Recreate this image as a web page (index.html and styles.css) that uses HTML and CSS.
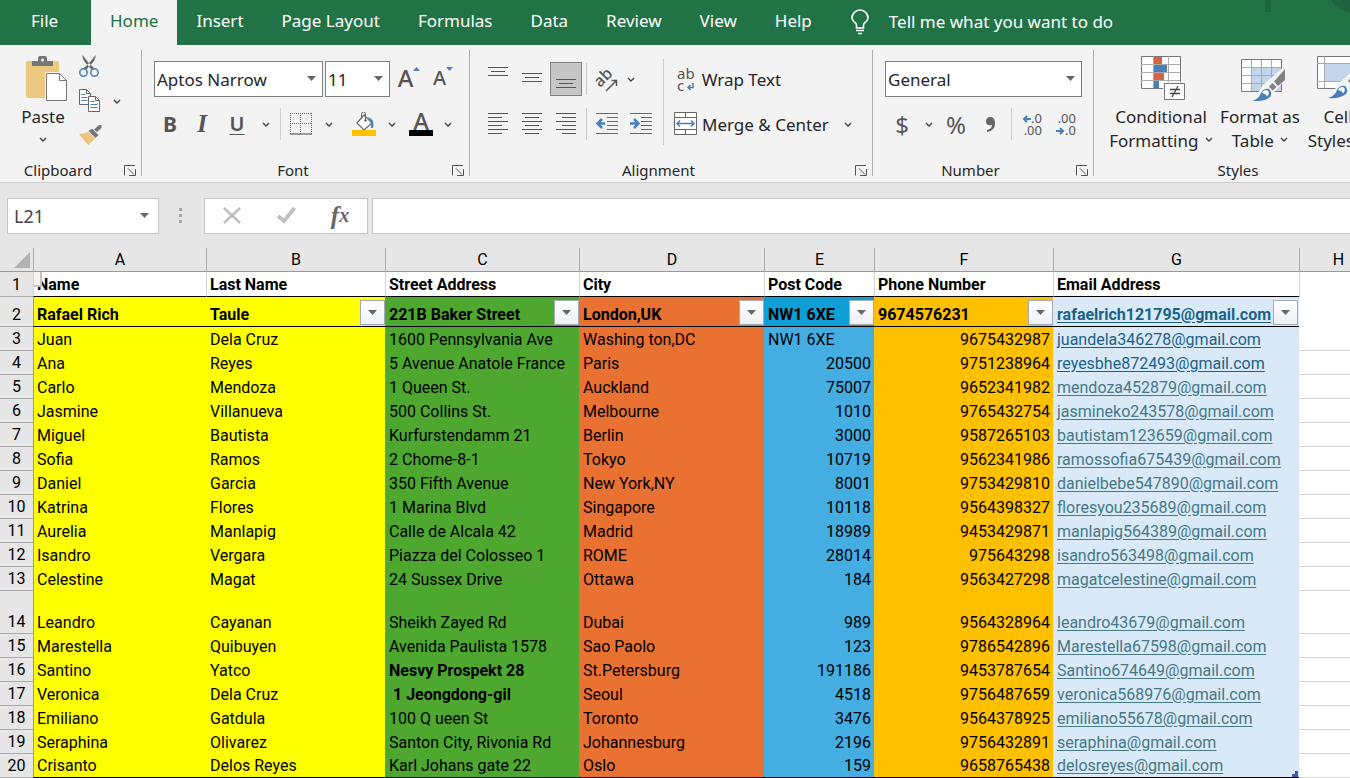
FILE: index.html
```
<!DOCTYPE html>
<html lang="en">
<head>
    <meta charset="UTF-8">
    <meta name="viewport" content="width=device-width, initial-scale=1.0">
    <title>Address List</title>
    <link rel="stylesheet" href="styles.css">
</head>
<body>
    <!-- shared icon shapes -->
    <svg class="defs" aria-hidden="true">
        <symbol id="chev" viewBox="0 0 8 6"><path d="M1 1l3 3 3-3" fill="none" stroke="#444" stroke-width="1.4"/></symbol>
        <symbol id="arrow" viewBox="0 0 9 5"><path d="M0 0h9L4.500 5z" fill="#666"/></symbol>
        <symbol id="launch" viewBox="0 0 12 11"><path d="M.5 10.500V.5H11M4 3.500l6 6M11.500 4v6.500H5" fill="none" stroke="#555"/></symbol>
    </svg>

    <nav class="tabs">
        <a href="#" class="file">File</a>
        <a href="#" class="active">Home</a>
        <a href="#">Insert</a>
        <a href="#">Page Layout</a>
        <a href="#">Formulas</a>
        <a href="#">Data</a>
        <a href="#">Review</a>
        <a href="#">View</a>
        <a href="#">Help</a>
        <button class="tell">
            <svg width="18" height="26" viewBox="0 0 18 26" fill="none" stroke="#fff" stroke-width="1.600"><path d="M5.500 19v-3C5.500 13 1 13 1 9a8 8 0 0 1 16 0c0 4-4.500 4-4.500 7v3zM5 21.500h8M7 24.500h4"/></svg>
            Tell me what you want to do
        </button>
        <svg class="deco" width="90" height="45" viewBox="0 0 90 45" fill="#1e6340"><path d="M5 0h6v12H5zM72 0h18v13C82 10 75 6 72 2z"/></svg>
    </nav>

    <div class="ribbon">
        <section class="group clipboard">
            <div class="body">
                <button class="paste">
                    <svg width="42" height="46" viewBox="0 0 42 46"><rect y="5" width="33" height="37" rx="2" fill="#edc87e"/><path d="M6 10V5h6V2q0-2 2-2h5q2 0 2 2v3h6v5z" fill="#777"/><circle cx="16.500" cy="4" r="1.500" fill="#f3f3f3"/><path d="M19 16h16l7 7v23H19z" fill="#f3f3f3"/><path d="M20.500 17.500h13l7 7v20h-20z" fill="#fff" stroke="#777"/><path d="M33.500 17.500v7h7" fill="none" stroke="#777"/></svg>
                    <span>Paste</span>
                    <svg class="chev"><use href="#chev"/></svg>
                </button>
                <div class="stack">
                    <button aria-label="Cut"><svg width="20" height="22" viewBox="0 0 20 22"><path d="M3.500 0l5 6.500L16 14l-3 1-6-6.500Q3 4 3.500 0zM16.500 0l-5 6.500L4 14l3 1 6-6.500Q17 4 16.500 0z" fill="#666"/><g fill="none" stroke="#4a7fb8" stroke-width="1.500"><circle cx="4.500" cy="17.500" r="3.700"/><circle cx="15.500" cy="17.500" r="3.700"/></g></svg></button>
                    <span class="copy">
                        <button aria-label="Copy"><svg width="21" height="23" viewBox="0 0 21 23" fill="#fff" stroke="#666"><path d="M.5.5h7l4 4v11H.5zM7.500.5v4h4"/><path d="M2.500 5.500h4M2.500 8.500h6M2.500 11.500h6" stroke="#4a7fb8"/><path d="M9.500 7.500h7l4 4v11h-11zM16.500 7.500v4h4"/><path d="M11.500 12.500h4M11.500 15.500h7M11.500 18.500h7" stroke="#4a7fb8"/></svg></button>
                        <button class="drop" aria-label="Copy options"><svg class="chev"><use href="#chev"/></svg></button>
                    </span>
                    <button aria-label="Format Painter"><svg width="23" height="21" viewBox="0 0 23 21"><path d="M0 9q5 0 9-2l7 6.500L9.500 20Q4 15 0 9z" fill="#edc480"/><path d="M9.500 6L13 3.500l6.500 6.500-3 3zM15 4.500L20 0h2.500v3L18 7z" fill="#777"/></svg></button>
                </div>
            </div>
            <footer><span>Clipboard</span><button aria-label="Clipboard settings"><svg class="launch"><use href="#launch"/></svg></button></footer>
        </section>

        <section class="group font">
            <div class="body rows">
                <div class="row">
                    <span class="combo name"><select aria-label="Font name"><option>Aptos Narrow</option></select><svg class="arrow"><use href="#arrow"/></svg></span>
                    <span class="combo size"><select aria-label="Font size"><option>11</option></select><svg class="arrow"><use href="#arrow"/></svg></span>
                    <button class="tool grow" aria-label="Increase font size"><span>A</span><svg width="7" height="4" viewBox="0 0 7 4"><path d="M0 4l3.500-4L7 4z" fill="#4a7fb8"/></svg></button>
                    <button class="tool grow small" aria-label="Decrease font size"><span>A</span><svg width="7" height="4" viewBox="0 0 7 4"><path d="M0 0h7L3.500 4z" fill="#4a7fb8"/></svg></button>
                </div>
                <div class="row">
                    <button class="tool bold">B</button>
                    <button class="tool italic">I</button>
                    <button class="tool under">U</button>
                    <button class="drop" aria-label="Underline options"><svg class="chev"><use href="#chev"/></svg></button>
                    <i class="line"></i>
                    <button class="tool" aria-label="Borders"><svg width="22" height="22" viewBox="0 0 22 22" fill="none" stroke="#666"><path d="M0 .5h22M.5 0v21M10.500 0v21M21.500 0v21M0 10.500h22" stroke-dasharray="1 1"/><path d="M0 21h22" stroke="#444"/></svg></button>
                    <button class="drop" aria-label="Border options"><svg class="chev"><use href="#chev"/></svg></button>
                    <button class="tool" aria-label="Fill color"><svg width="24" height="25" viewBox="0 0 24 25"><path d="M0 18h24v6H0z" fill="#ffc000"/><path d="M12 3l8 8-8 7-7-7z" fill="#fff" stroke="#666" stroke-width="1.200"/><path d="M9.500 7V2q0-2 2-2t2 2v7" fill="none" stroke="#666"/><circle cx="13.500" cy="8.500" r="1.200" fill="#666"/><path d="M16 5q7 2 5 11h-2q1-4-1-7z" fill="#4a7fb8"/></svg></button>
                    <button class="drop" aria-label="Fill color options"><svg class="chev"><use href="#chev"/></svg></button>
                    <button class="tool color" aria-label="Font color">A</button>
                    <button class="drop" aria-label="Font color options"><svg class="chev"><use href="#chev"/></svg></button>
                </div>
            </div>
            <footer><span>Font</span><button aria-label="Font settings"><svg class="launch"><use href="#launch"/></svg></button></footer>
        </section>

        <section class="group alignment">
            <div class="body">
                <div class="rows">
                    <div class="row">
                        <button class="tool" aria-label="Top Align"><svg width="20" height="34" viewBox="0 0 20 34" stroke="#555"><path d="M0 5.500h20M3 9.500h14M0 13.500h20"/></svg></button>
                        <button class="tool" aria-label="Middle Align"><svg width="20" height="34" viewBox="0 0 20 34" stroke="#555"><path d="M0 11.500h20M3 15.500h14M0 19.500h20"/></svg></button>
                        <button class="tool on" aria-label="Bottom Align"><svg width="20" height="34" viewBox="0 0 20 34" stroke="#555"><path d="M0 17.500h20M3 21.500h14M0 25.500h20"/></svg></button>
                        <i class="line"></i>
                        <button class="tool orient" aria-label="Orientation"><span>ab</span><svg width="14" height="14" viewBox="0 0 14 14" fill="none" stroke="#555" stroke-width="1.500"><path d="M2 13L12 3M7.500 2.500h5V8"/></svg></button>
                        <button class="drop turn" aria-label="Orientation options"><svg class="chev"><use href="#chev"/></svg></button>
                    </div>
                    <div class="row">
                        <button class="tool" aria-label="Align Left"><svg width="20" height="22" viewBox="0 0 20 22" stroke="#555"><path d="M0 .5h20M0 4.500h14M0 8.500h20M0 12.500h14M0 16.500h20M0 20.500h14"/></svg></button>
                        <button class="tool" aria-label="Center"><svg width="20" height="22" viewBox="0 0 20 22" stroke="#555"><path d="M0 .5h20M3 4.500h14M0 8.500h20M3 12.500h14M0 16.500h20M3 20.500h14"/></svg></button>
                        <button class="tool" aria-label="Align Right"><svg width="20" height="22" viewBox="0 0 20 22" stroke="#555"><path d="M0 .5h20M6 4.500h14M0 8.500h20M6 12.500h14M0 16.500h20M6 20.500h14"/></svg></button>
                        <i class="line"></i>
                        <button class="tool" aria-label="Decrease Indent"><svg width="22" height="22" viewBox="0 0 22 22" stroke="#666"><path d="M0 .5h22M11 4.500h11M11 8.500h11M11 12.500h11M11 16.500h11M0 20.500h22"/><path d="M9 10.500H2M6 6l-4.500 4.500L6 15" fill="none" stroke="#4a7fb8" stroke-width="2.500"/></svg></button>
                        <button class="tool" aria-label="Increase Indent"><svg width="22" height="22" viewBox="0 0 22 22" stroke="#666"><path d="M0 .5h22M11 4.500h11M11 8.500h11M11 12.500h11M11 16.500h11M0 20.500h22"/><path d="M0 10.500h7M4 6l4.500 4.500L4 15" fill="none" stroke="#4a7fb8" stroke-width="2.500"/></svg></button>
                    </div>
                </div>
                <i class="line tall"></i>
                <div class="rows wide">
                    <button class="row text"><span class="wrapicon"><span>ab</span><span>c<svg width="8" height="8" viewBox="0 0 8 8" fill="none" stroke="#4a7fb8" stroke-width="1.500"><path d="M7 0v4.500H2M4.500 2L2 4.500 4.500 7"/></svg></span></span>Wrap Text</button>
                    <div class="row">
                        <button class="text"><svg width="24" height="24" viewBox="0 0 24 24" fill="#fff" stroke="#666"><path d="M.5.5h22v22H.5zM11.500 0v5M11.500 18v5M0 5.500h23M0 17.500h23"/><path d="M3 11.500h17M6 8.500l-3 3 3 3M17 8.500l3 3-3 3" fill="none" stroke="#4a7fb8" stroke-width="1.500"/></svg>Merge &amp; Center</button>
                        <button class="drop" aria-label="Merge options"><svg class="chev"><use href="#chev"/></svg></button>
                    </div>
                </div>
            </div>
            <footer><span>Alignment</span><button aria-label="Alignment settings"><svg class="launch"><use href="#launch"/></svg></button></footer>
        </section>

        <section class="group number">
            <div class="body rows">
                <div class="row">
                    <span class="combo format"><select aria-label="Number format"><option>General</option></select><svg class="arrow"><use href="#arrow"/></svg></span>
                </div>
                <div class="row">
                    <button class="tool sign">$</button>
                    <button class="drop" aria-label="Currency options"><svg class="chev"><use href="#chev"/></svg></button>
                    <button class="tool sign">%</button>
                    <button class="tool" aria-label="Comma Style"><svg width="10" height="15" viewBox="0 0 10 15"><path d="M1 13q5-1 5-5Q0 9 0 4.500 0 0 4.500 0 9 0 9 6q0 8-8 9z" fill="#666"/></svg></button>
                    <i class="line"></i>
                    <button class="tool dec" aria-label="Increase Decimal"><span><svg width="9" height="8" viewBox="0 0 9 8" fill="none" stroke="#4a7fb8" stroke-width="2"><path d="M9 4H2M5 1L2 4l3 3"/></svg>.0</span><span>.00</span></button>
                    <button class="tool dec" aria-label="Decrease Decimal"><span>.00</span><span><svg width="9" height="8" viewBox="0 0 9 8" fill="none" stroke="#4a7fb8" stroke-width="2"><path d="M0 4h7M4 1l3 3-3 3"/></svg>.0</span></button>
                </div>
            </div>
            <footer><span>Number</span><button aria-label="Number settings"><svg class="launch"><use href="#launch"/></svg></button></footer>
        </section>

        <section class="group styles">
            <div class="body">
                <button class="big cond">
                    <svg width="46" height="46" viewBox="0 0 46 46"><path d="M1.500 1.500h39v32h-39z" fill="#fff" stroke="#777"/><path d="M1 9.500h39M1 17.500h39M1 25.500h39M13.500 1v32M28.500 1v32" stroke="#aaa"/><path d="M14 2h8v7h-8zM14 18h10v7H14z" fill="#d86344"/><path d="M14 10h13v7H14zM14 26h5v7h-5z" fill="#4a7fb8"/><path d="M23 27h23v19H23z" fill="#f3f3f3"/><path d="M24.500 28.500h20v16h-20z" fill="#fff" stroke="#777"/><path d="M30 34.500h10M30 38.500h10M38 31l-6 11" stroke="#444" stroke-width="1.300"/></svg>
                    <span>Conditional</span>
                    <span>Formatting <svg class="chev"><use href="#chev"/></svg></span>
                </button>
                <button class="big table">
                    <svg width="46" height="46" viewBox="0 0 46 46"><path d="M2.500 4.500h40v32h-40z" fill="#fff" stroke="#777"/><path d="M13 13h29v23H13z" fill="#c3d5ea"/><path d="M3 12.500h39M3 20.500h39M3 28.500h39M12.500 5v31M22.500 5v31M32.500 5v31" stroke="#aaa"/><path d="M46 11v14L32 41 14 45l10-15z" fill="#f3f3f3"/><path d="M46 14v11l-7 6-4-4.500zM33.500 28l4 4-4 3.500-3.500-4z" fill="#808080"/><path d="M13 46q7-2 9-8 3-5 8-4 4 4 1 8-6 5-18 4z" fill="#4a7fb8"/><path d="M23 38q2-4 6-2.500 2 3-1 6-1-3-5-3.500z" fill="#fff"/></svg>
                    <span>Format as</span>
                    <span>Table <svg class="chev"><use href="#chev"/></svg></span>
                </button>
                <button class="big cell">
                    <svg width="46" height="46" viewBox="0 0 46 46"><path d="M.5 1.500h45v32H.5z" fill="#fff" stroke="#777"/><path d="M8 9h32v18H8z" fill="#c3d5ea"/><path d="M0 8.500h45M0 26.500h45M7.500 1v32" stroke="#aaa"/><path d="M46 6v16L30 40 12 43l10-15z" fill="#f3f3f3"/><path d="M46 10v11l-11 9-4-4z" fill="#808080"/><path d="M11 43q7-2 9-8 3-5 8-4 4 4 1 8-6 5-18 4z" fill="#4a7fb8"/><path d="M21 35q2-4 6-2.500 2 3-1 6-1-3-5-3.500z" fill="#fff"/></svg>
                    <span>Cell</span>
                    <span>Styles <svg class="chev"><use href="#chev"/></svg></span>
                </button>
            </div>
            <footer><span>Styles</span></footer>
        </section>
    </div>

    <div class="formula">
        <span class="combo cellname"><input type="text" value="L21" aria-label="Name Box"><svg class="arrow"><use href="#arrow"/></svg></span>
        <svg class="dots" width="3" height="16" viewBox="0 0 3 16" fill="#a6a6a6"><path d="M0 0h3v3H0zM0 6h3v3H0zM0 12h3v3H0z"/></svg>
        <div class="entry">
            <button aria-label="Cancel"><svg width="18" height="17" viewBox="0 0 18 17" stroke="#c0c0c0" stroke-width="2.500"><path d="M1 1l16 15M17 1L1 16"/></svg></button>
            <button aria-label="Enter"><svg width="19" height="17" viewBox="0 0 19 17" fill="none" stroke="#c0c0c0" stroke-width="4"><path d="M1 9l6 5L17.500 1"/></svg></button>
            <button class="fx" aria-label="Insert Function">f<small>x</small></button>
        </div>
        <input class="value" type="text" aria-label="Formula Bar">
    </div>

    <div class="sheet">
        <table>
            <colgroup>
                <col class="n"><col class="a"><col class="b"><col class="c"><col class="d"><col class="e"><col class="f"><col class="g"><col class="h">
            </colgroup>
            <thead>
                <tr><th><svg class="corner" width="16" height="16" viewBox="0 0 16 16"><path d="M16 0v16H0z" fill="#b2b2b2"/></svg></th><th>A</th><th>B</th><th>C</th><th>D</th><th>E</th><th>F</th><th>G</th><th>H</th></tr>
            </thead>
            <tbody>
                <tr class="titles"><th>1</th><td><i class="tip"></i>Name</td><td>Last Name</td><td>Street Address</td><td>City</td><td>Post Code</td><td>Phone Number</td><td>Email Address</td><td></td></tr>
                <tr class="filters"><th>2</th>
                    <td>Rafael Rich</td>
                    <td>Taule<button aria-label="Filter B"><svg class="arrow"><use href="#arrow"/></svg></button></td>
                    <td>221B Baker Street<button aria-label="Filter C"><svg class="arrow"><use href="#arrow"/></svg></button></td>
                    <td>London,UK<button aria-label="Filter D"><svg class="arrow"><use href="#arrow"/></svg></button></td>
                    <td>NW1 6XE<button aria-label="Filter E"><svg class="arrow"><use href="#arrow"/></svg></button></td>
                    <td>9674576231<button aria-label="Filter F"><svg class="arrow"><use href="#arrow"/></svg></button></td>
                    <td><a class="new" href="mailto:rafaelrich121795@gmail.com">rafaelrich121795@gmail.com</a><button aria-label="Filter G"><svg class="arrow"><use href="#arrow"/></svg></button></td>
                    <td></td>
                </tr>
                <tr><th>3</th><td>Juan</td><td>Dela Cruz</td><td>1600 Pennsylvania Ave</td><td>Washing ton,DC</td><td class="left">NW1 6XE</td><td>9675432987</td><td><a class="new" href="mailto:juandela346278@gmail.com">juandela346278@gmail.com</a></td><td></td></tr>
                <tr><th>4</th><td>Ana</td><td>Reyes</td><td>5 Avenue Anatole France</td><td>Paris</td><td>20500</td><td>9751238964</td><td><a class="new" href="mailto:reyesbhe872493@gmail.com">reyesbhe872493@gmail.com</a></td><td></td></tr>
                <tr><th>5</th><td>Carlo</td><td>Mendoza</td><td>1 Queen St.</td><td>Auckland</td><td>75007</td><td>9652341982</td><td><a href="mailto:mendoza452879@gmail.com">mendoza452879@gmail.com</a></td><td></td></tr>
                <tr><th>6</th><td>Jasmine</td><td>Villanueva</td><td>500 Collins St.</td><td>Melbourne</td><td>1010</td><td>9765432754</td><td><a href="mailto:jasmineko243578@gmail.com">jasmineko243578@gmail.com</a></td><td></td></tr>
                <tr><th>7</th><td>Miguel</td><td>Bautista</td><td>Kurfurstendamm 21</td><td>Berlin</td><td>3000</td><td>9587265103</td><td><a href="mailto:bautistam123659@gmail.com">bautistam123659@gmail.com</a></td><td></td></tr>
                <tr><th>8</th><td>Sofia</td><td>Ramos</td><td>2 Chome-8-1</td><td>Tokyo</td><td>10719</td><td>9562341986</td><td><a href="mailto:ramossofia675439@gmail.com">ramossofia675439@gmail.com</a></td><td></td></tr>
                <tr><th>9</th><td>Daniel</td><td>Garcia</td><td>350 Fifth Avenue</td><td>New York,NY</td><td>8001</td><td>9753429810</td><td><a href="mailto:danielbebe547890@gmail.com">danielbebe547890@gmail.com</a></td><td></td></tr>
                <tr><th>10</th><td>Katrina</td><td>Flores</td><td>1 Marina Blvd</td><td>Singapore</td><td>10118</td><td>9564398327</td><td><a href="mailto:floresyou235689@gmail.com">floresyou235689@gmail.com</a></td><td></td></tr>
                <tr><th>11</th><td>Aurelia</td><td>Manlapig</td><td>Calle de Alcala 42</td><td>Madrid</td><td>18989</td><td>9453429871</td><td><a href="mailto:manlapig564389@gmail.com">manlapig564389@gmail.com</a></td><td></td></tr>
                <tr><th>12</th><td>Isandro</td><td>Vergara</td><td>Piazza del Colosseo 1</td><td>ROME</td><td>28014</td><td>975643298</td><td><a href="mailto:isandro563498@gmail.com">isandro563498@gmail.com</a></td><td></td></tr>
                <tr><th>13</th><td>Celestine</td><td>Magat</td><td>24 Sussex Drive</td><td>Ottawa</td><td>184</td><td>9563427298</td><td><a href="mailto:magatcelestine@gmail.com">magatcelestine@gmail.com</a></td><td></td></tr>
                <tr class="high"><th>14</th><td>Leandro</td><td>Cayanan</td><td>Sheikh Zayed Rd</td><td>Dubai</td><td>989</td><td>9564328964</td><td><a href="mailto:leandro43679@gmail.com">leandro43679@gmail.com</a></td><td></td></tr>
                <tr><th>15</th><td>Marestella</td><td>Quibuyen</td><td>Avenida Paulista 1578</td><td>Sao Paolo</td><td>123</td><td>9786542896</td><td><a href="mailto:Marestella67598@gmail.com">Marestella67598@gmail.com</a></td><td></td></tr>
                <tr><th>16</th><td>Santino</td><td>Yatco</td><td><b>Nesvy Prospekt 28</b></td><td>St.Petersburg</td><td>191186</td><td>9453787654</td><td><a href="mailto:Santino674649@gmail.com">Santino674649@gmail.com</a></td><td></td></tr>
                <tr><th>17</th><td>Veronica</td><td>Dela Cruz</td><td><b>&nbsp;1 Jeongdong-gil</b></td><td>Seoul</td><td>4518</td><td>9756487659</td><td><a href="mailto:veronica568976@gmail.com">veronica568976@gmail.com</a></td><td></td></tr>
                <tr><th>18</th><td>Emiliano</td><td>Gatdula</td><td>100 Q ueen St</td><td>Toronto</td><td>3476</td><td>9564378925</td><td><a href="mailto:emiliano55678@gmail.com">emiliano55678@gmail.com</a></td><td></td></tr>
                <tr><th>19</th><td>Seraphina</td><td>Olivarez</td><td>Santon City, Rivonia Rd</td><td>Johannesburg</td><td>2196</td><td>9756432891</td><td><a href="mailto:seraphina@gmail.com">seraphina@gmail.com</a></td><td></td></tr>
                <tr class="last"><th>20</th><td>Crisanto</td><td>Delos Reyes</td><td>Karl Johans gate 22</td><td>Oslo</td><td>159</td><td>9658765438</td><td><a href="mailto:delosreyes@gmail.com">delosreyes@gmail.com</a><svg class="handle" width="6" height="6" viewBox="0 0 6 6"><path d="M3 0h3v6H0V3h3z" fill="#4458b0"/></svg></td><td></td></tr>
            </tbody>
        </table>
    </div>
</body>
</html>
```
FILE: styles.css
```
*{
    box-sizing: border-box;
}
body{
    margin: 0;
    background: #e6e6e6;
    color: #262626;
    font-family: "Noto Sans", "Open Sans", sans-serif;
    font-size: 17px;
    overflow: hidden;
}
button{
    display: flex;
    align-items: center;
    justify-content: center;
    margin: 0;
    padding: 0;
    border: 0;
    background: none;
    color: inherit;
    font: inherit;
    white-space: nowrap;
}
svg{
    flex: none;
}
.defs{
    position: absolute;
    width: 0;
    height: 0;
}
.chev{
    width: 8px;
    height: 6px;
}
.arrow{
    width: 9px;
    height: 5px;
}
.launch{
    width: 12px;
    height: 11px;
}

/* tabs */
.tabs{
    position: relative;
    display: flex;
    height: 45px;
    background: #217346;
    color: #fff;
    line-height: 42px;
    overflow: hidden;
}
.tabs a{
    padding: 0 19px;
    color: #fff;
    text-decoration: none;
    white-space: nowrap;
}
.tabs .file{
    width: 91px;
    padding: 0 31px;
}
.tabs .active{
    background: #f3f3f3;
    color: #217346;
}
.tell{
    height: 43px;
    gap: 20px;
    margin-left: 20px;
}
.deco{
    position: absolute;
    top: 0;
    right: 0;
}

/* ribbon */
.ribbon{
    display: flex;
    height: 138px;
    background: #f3f3f3;
    border-bottom: 1px solid #cfcfcf;
    overflow: hidden;
}
.group{
    position: relative;
    display: flex;
    flex: none;
    flex-direction: column;
    padding-top: 3px;
}
.group::after{
    content: "";
    position: absolute;
    top: 5px;
    right: 0;
    bottom: 6px;
    width: 1px;
    background: #b0b0b0;
}
.styles::after{
    display: none;
}
.body{
    display: flex;
    flex: 1;
}
.group footer{
    display: flex;
    align-items: center;
    height: 24px;
    font-size: 15px;
    line-height: 24px;
}
.group footer span{
    flex: 1;
    text-align: center;
}
.group footer button{
    width: 26px;
    padding-left: 8px;
    justify-content: flex-start;
}
.clipboard{
    width: 142px;
}
.font{
    width: 328px;
}
.alignment{
    width: 403px;
}
.number{
    width: 221px;
}
.styles{
    width: 288px;
}
.paste{
    flex-direction: column;
    justify-content: flex-start;
    width: 60px;
    margin-left: 13px;
    padding: 8px 0 0 8px;
}
.paste span{
    margin-left: -8px;
    line-height: 30px;
}
.paste .chev{
    margin: 5px 8px 0 0;
}
.stack{
    display: grid;
    grid-template-rows: 35px 35px 35px;
    align-items: center;
    justify-items: start;
    margin-left: 6px;
}
.copy{
    display: flex;
}
.drop{
    width: 20px;
    height: 34px;
    padding-top: 2px;
}
.copy .drop{
    width: 34px;
    height: 23px;
    padding-top: 3px;
}
.rows{
    display: flex;
    flex-direction: column;
    gap: 9px;
    padding-top: 13px;
}
.font .rows,
.number .rows{
    padding-left: 12px;
}
.row{
    display: flex;
    align-items: center;
    height: 36px;
}
.combo{
    position: relative;
    display: flex;
    height: 36px;
    border: 1px solid #7f7f7f;
    background: #fff;
}
.combo select,
.combo input{
    width: 100%;
    padding: 0 2px;
    border: 0;
    background: none;
    color: #262626;
    font: inherit;
    appearance: none;
}
.combo .arrow{
    position: absolute;
    top: 14px;
    right: 6px;
}
.combo.name{
    width: 169px;
    margin-right: 2px;
}
.combo.size{
    width: 65px;
}
.combo.format{
    width: 197px;
}
.tool{
    width: 36px;
    height: 34px;
    color: #555;
}
.grow{
    align-items: flex-start;
    margin-left: 1px;
    font-size: 24px;
    font-weight: 500;
    line-height: 32px;
}
.grow svg{
    margin-top: 5px;
}
.grow.small{
    margin-left: -2px;
    font-size: 20px;
}
.bold,
.italic{
    width: 32px;
    font-size: 21px;
    font-weight: bold;
    line-height: 32px;
}
.italic{
    font-family: "Liberation Serif", serif;
    font-size: 25px;
    font-style: italic;
}
.under{
    width: 38px;
    padding-bottom: 2px;
    font-size: 20px;
    font-weight: 600;
    text-decoration: underline;
    text-decoration-thickness: 1px;
    text-underline-offset: 3px;
}
.line{
    width: 1px;
    height: 32px;
    margin: 0 2px 0 4px;
    background: #cdcdcd;
}
.font .drop + .tool{
    margin-left: 7px;
}
.font .drop + .color{
    width: 24px;
    height: 24px;
    border-bottom: 6px solid #000;
    font-size: 24px;
    font-weight: 500;
    line-height: 18px;
    margin-right: 5px;
}
.alignment .body{
    padding-left: 11px;
}
.alignment .tool{
    width: 34px;
}
.alignment .tool.on{
    width: 32px;
    margin: 0 1px;
    border: 1px solid #7f7f7f;
    background: #c6c6c6;
}
.alignment .line{
    margin: 0 3px;
}
.alignment .tool.orient{
    position: relative;
}
.orient span{
    transform: rotate(-45deg);
    font-size: 16px;
    font-weight: 500;
    line-height: 16px;
    margin: 0 8px 4px 0;
}
.orient svg{
    position: absolute;
    right: 6px;
    bottom: 4px;
}
.drop.turn{
    width: 14px;
}
.alignment .line.tall{
    height: 86px;
    margin: 11px 10px 0 5px;
}
.text{
    gap: 4px;
}
.row.text{
    justify-content: flex-start;
    gap: 7px;
    padding-left: 3px;
}
.wrapicon{
    display: flex;
    flex-direction: column;
    color: #555;
    font-size: 15px;
    line-height: 12px;
    text-align: left;
}
.wrapicon svg{
    margin-left: 2px;
}
.wide .drop{
    margin-left: 9px;
}
.sign{
    width: 34px;
    font-size: 24px;
}
.number .line{
    margin: 0 2px;
}
.number .tool.dec{
    flex-direction: column;
    align-items: flex-end;
    width: 28px;
    margin-right: 6px;
    font-size: 13px;
    line-height: 12px;
}
.styles .body{
    padding-left: 15px;
}
.big{
    flex-direction: column;
    justify-content: flex-start;
    padding-top: 7px;
    line-height: 24px;
}
.big > svg{
    margin: 0 0 4px 4px;
}
.big .chev{
    margin: 0 0 4px 2px;
}
.cond{
    width: 104px;
}
.table{
    width: 94px;
}
.cell{
    width: 62px;
}

/* formula bar */
.formula{
    display: flex;
    align-items: center;
    height: 65px;
    padding-left: 7px;
}
.cellname{
    width: 152px;
    border-color: #c6c6c6;
    font-size: 18px;
}
.combo.cellname input{
    padding: 0 6px;
    color: #444;
}
.combo.cellname .arrow{
    right: 9px;
}
.dots{
    margin: 0 22px 0 20px;
}
.entry{
    display: flex;
    width: 164px;
    height: 36px;
    margin-right: 4px;
    border: 1px solid #c6c6c6;
    background: #fdfdfd;
}
.entry button{
    flex: 1;
}
.fx{
    color: #666;
    font-family: "Liberation Serif", serif;
    font-size: 25px;
    font-style: italic;
    font-weight: bold;
}
.fx small{
    font-size: 20px;
}
.value{
    flex: 1;
    height: 36px;
    border: 1px solid #c6c6c6;
    border-right: 0;
    background: #fdfdfd;
    font: inherit;
}

/* sheet */
.sheet{
    overflow: hidden;
    background: #fff;
    color: #000;
    font-family: Roboto, "Liberation Sans", sans-serif;
    font-size: 16px;
}
table{
    width: 100%;
    table-layout: fixed;
    border-collapse: separate;
    border-spacing: 0;
}
.n{ width: 33px; }
.a{ width: 173px; }
.b{ width: 179px; }
.c{ width: 194px; }
.d{ width: 185px; }
.e{ width: 110px; }
.f{ width: 179px; }
.g{ width: 246px; }
.h{ width: 78px; }
th,td{
    position: relative;
    height: 24px;
    padding: 0 0 0 4px;
    line-height: 23px;
    vertical-align: bottom;
    text-align: left;
    white-space: nowrap;
    overflow: hidden;
}
th{
    padding: 1px 0 0;
    background: #e6e6e6;
    border-bottom: 1px solid #ababab;
    font-weight: normal;
    line-height: 22px;
    text-align: center;
}
thead th{
    border-bottom-color: #999;
    border-left: 1px solid #ababab;
}
thead th:first-child{
    border-left: 0;
}
.corner{
    display: block;
    margin: 0 0 3px 14px;
}
td:nth-child(2){
    padding-left: 3px;
    border-left: 1px solid #999;
}
td:nth-child(2),
td:nth-child(3){
    background-color: #ff0;
}
td:nth-child(4){
    background-color: #4ea72e;
}
td:nth-child(5){
    background-color: #e97132;
}
td:nth-child(6){
    background-color: #44aee3;
}
td:nth-child(7){
    background-color: #ffc000;
}
td:nth-child(6),
td:nth-child(7){
    padding-right: 3px;
    text-align: right;
}
td:nth-child(8){
    background-color: #dae9f8;
}
td:nth-child(9){
    border-bottom: 1px solid #d4d4d4;
}
td a{
    color: #467886;
    text-underline-offset: 2px;
}
td a.new{
    color: #1b6288;
}
.titles td{
    height: 25px;
    padding-left: 3px;
    border-bottom: 1px solid #000;
    border-left: 1px solid #d4d4d4;
    background-color: #fff;
    font-weight: bold;
    line-height: 22px;
}
.titles td,
.filters td{
    text-align: left;
}
.filters td{
    height: 30px;
    border-bottom: 1px solid #000;
    font-weight: bold;
    line-height: 22px;
}
.filters td:nth-child(6){
    background-color: #0f9ed5;
}
.titles td:last-child,
.filters td:last-child{
    border-bottom: 0;
}
.filters button{
    position: absolute;
    right: 0;
    bottom: 1px;
    width: 25px;
    height: 25px;
    border: 1px solid #a3a9b5;
    background: linear-gradient(#fff, #eef0f5);
}
.filters td:nth-child(8) button{
    right: 1px;
}
td.left{
    text-align: left;
}
.high td{
    height: 43px;
}
.last td{
    border-bottom: 1px solid #000;
    line-height: 22px;
}
.last td:last-child{
    border-bottom-color: #d4d4d4;
}
.tip{
    position: absolute;
    top: 0;
    left: 0;
    width: 8px;
    height: 15px;
    border: solid #c4c4c4;
    border-width: 0 2px 2px 0;
    background: #f4f4f4;
}
.handle{
    position: absolute;
    right: 1px;
    bottom: 0;
}
```
